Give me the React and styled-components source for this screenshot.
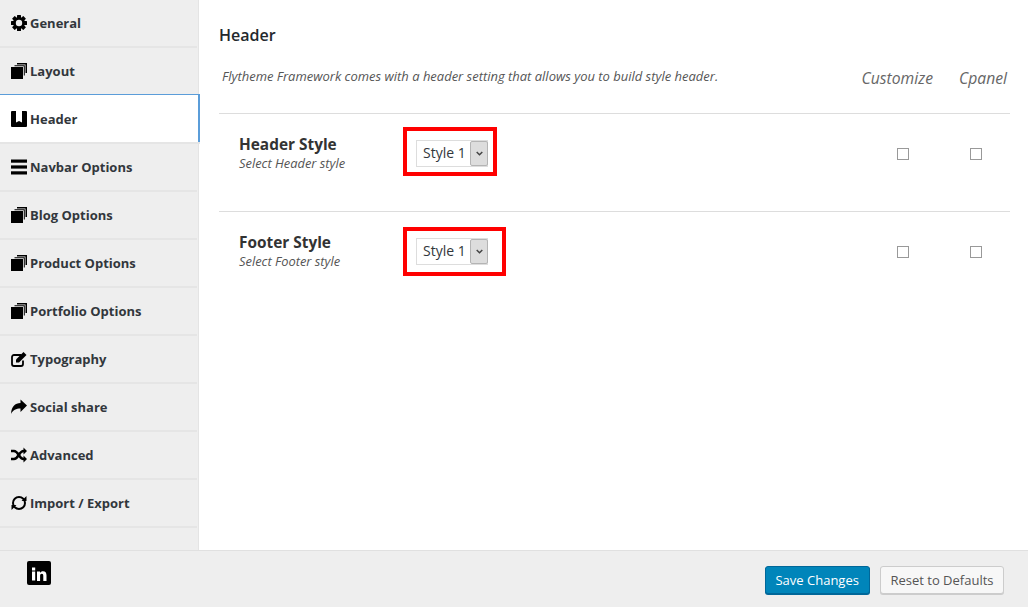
import React from 'react';
import styled, { createGlobalStyle } from 'styled-components';

const GlobalStyle = createGlobalStyle`
  html, body { margin: 0; padding: 0; background: #fff; }
  body { font-family: 'Open Sans', 'Noto Sans', sans-serif; color: #333; }
`;

const Page = styled.div`
  width: 1028px;
  height: 607px;
  display: flex;
  flex-direction: column;
  overflow: hidden;
`;
const Body = styled.div`
  height: 550px;
  display: flex;
`;
const Sidebar = styled.ul`
  width: 198px;
  flex: none;
  margin: 0;
  padding: 0;
  list-style: none;
  background: #eee;
  border-right: 1px solid #e4e4e4;
`;
const NavItem = styled.li`
  height: 48px;
  box-sizing: border-box;
  display: flex;
  align-items: center;
  gap: 3px;
  padding: 0 0 1px 11px;
  font-size: 13px;
  font-weight: 700;
  color: #32373c;
  border-bottom: 2px solid #e5e5e5;
  width: 197px;
  ${(p) => p.$active && `
    position: relative;
    z-index: 1;
    width: 200px;
    height: 50px;
    margin-top: -2px;
    padding-top: 2px;
    background: #fff;
    box-shadow: inset 0 1px 0 #5b9dd9, inset -2px 0 0 #5b9dd9;
  `}
`;
const IconBox = styled.span`
  width: 16px;
  height: 16px;
  display: flex;
  align-items: center;
  justify-content: center;
  flex: none;
`;
const Main = styled.main`
  flex: 1;
  padding: 0 18px 0 20px;
  min-width: 0;
`;
const Title = styled.h2`
  margin: 0;
  padding-top: 24px;
  height: 22px;
  font-size: 16px;
  line-height: 22px;
  font-weight: 600;
  color: #23282d;
`;
const IntroRow = styled.div`
  height: 68px;
  display: flex;
  align-items: center;
  box-sizing: border-box;
  padding: 0 3px 2px 3px;
  border-bottom: 1px solid #ddd;
`;
const Intro = styled.p`
  flex: 1;
  margin: 0;
  font-size: 12.97px;
  font-style: italic;
  color: #555;
  padding-bottom: 5px;
`;
const ColumnHead = styled.span`
  font-size: 15.7px;
  font-style: italic;
  color: #666;
  margin-left: 26px;
  padding-bottom: 1px;
`;
const Row = styled.div`
  height: 98px;
  box-sizing: border-box;
  display: flex;
  align-items: flex-start;
  padding-left: 20px;
  border-bottom: ${(p) => (p.$last ? 'none' : '1px solid #ddd')};
`;
const Label = styled.div`
  width: 164px;
  padding-top: 21px;
`;
const LabelTitle = styled.div`
  font-size: 15.4px;
  line-height: 20px;
  font-weight: 700;
  color: #333;
`;
const LabelHint = styled.div`
  font-size: 12.9px;
  line-height: 15px;
  margin-top: 1px;
  font-style: italic;
  color: #555;
`;
const Highlight = styled.div`
  width: ${(p) => p.$width}px;
  height: 49px;
  box-sizing: border-box;
  margin-top: ${(p) => p.$top}px;
  border: 4px solid #f00;
  padding: ${(p) => p.$inset}px 0 0 9px;
`;
const Select = styled.div`
  width: 72px;
  height: 27px;
  box-sizing: border-box;
  display: flex;
  justify-content: space-between;
  border: 1px solid #ddd;
  background: #fff;
`;
const SelectText = styled.span`
  font-size: 14px;
  line-height: 24px;
  padding-left: 6px;
  color: #32373c;
`;
const SelectArrow = styled.span`
  width: 16px;
  margin-right: -1px;
  display: flex;
  align-items: center;
  justify-content: center;
  background: #ddd;
  border: 1px solid #b4b4b4;
  border-radius: 2px;
`;
const Checks = styled.div`
  margin-left: auto;
  display: flex;
  gap: 61px;
  padding: 34px 28px 0 0;
`;
const Checkbox = styled.span`
  width: 12px;
  height: 12px;
  box-sizing: border-box;
  border: 1px solid #999;
  background: #fff;
  display: block;
`;
const Footer = styled.footer`
  height: 57px;
  box-sizing: border-box;
  display: flex;
  align-items: flex-start;
  justify-content: space-between;
  background: #eee;
  border-top: 1px solid #e0e0e0;
  padding: 9px 24px 0 27px;
`;
const Social = styled.span`
  display: block;
  height: 24px;
  margin-top: 1px;
`;
const Buttons = styled.div`
  display: flex;
  gap: 10px;
  padding-top: 6px;
`;
const Button = styled.button`
  height: 28px;
  box-sizing: border-box;
  padding: ${(p) => (p.$primary ? '0 10px 0 9px' : '0 9.5px')};
  font-family: inherit;
  font-size: 13px;
  border-radius: 3px;
  border: 1px solid ${(p) => (p.$primary ? '#006799' : '#ccc')};
  background: ${(p) => (p.$primary ? '#0085ba' : '#f7f7f7')};
  color: ${(p) => (p.$primary ? '#fff' : '#555')};
  box-shadow: 0 1px 0 ${(p) => (p.$primary ? '#006799' : '#ccc')};
`;

const Icon = ({ children }) => (
  <svg width="16" height="16" viewBox="0 0 16 16" fill="#000">{children}</svg>
);

const Gear = () => (
  <Icon>
    {[0, 45, 90, 135].map((a) => (
      <rect key={a} x="6" y="0" width="4" height="16" rx="0.5" transform={`rotate(${a} 8 8)`} />
    ))}
    <circle cx="8" cy="8" r="6" />
    <circle cx="8" cy="8" r="3.200" fill="#eee" />
  </Icon>
);
const Stack = () => (
  <Icon>
    <path d="M6 0h10v10h-1.500V1.500H6z" />
    <path d="M3.500 2.200H13.800V12.500h-1V3.200H3.500z" />
    <rect x="0" y="4" width="12" height="12" />
  </Icon>
);
const Bookmark = () => (
  <Icon>
    <path d="M1 0h4v11.500L8 10l3 1.500V0h4a1 1 0 0 1 1 1v14a1 1 0 0 1-1 1H1a1 1 0 0 1-1-1V1a1 1 0 0 1 1-1z" />
  </Icon>
);
const Bars = () => (
  <Icon>
    <rect x="0" y="0.500" width="16" height="3.200" />
    <rect x="0" y="6.400" width="16" height="3.200" />
    <rect x="0" y="12.300" width="16" height="3.200" />
  </Icon>
);
const Edit = () => (
  <Icon>
    <path d="M10.500 4H3a2 2 0 0 0-2 2v7a2 2 0 0 0 2 2h7a2 2 0 0 0 2-2V9.500" fill="none" stroke="#000" strokeWidth="1.800" />
    <path d="M5 8.500L12.500 1l3 3L8 11.500H5z" />
  </Icon>
);
const Share = () => (
  <Icon>
    <path d="M16 6.500L9.500 0.500V4C4 4 0.500 7.500 0 15c2-4 5-5.500 9.500-5.500V13z" />
  </Icon>
);
const Shuffle = () => (
  <Icon>
    <path d="M0 4h3c4.500 0 5 8 9.500 8h.5M0 12h3c4.500 0 5-8 9.500-8h.5" fill="none" stroke="#000" strokeWidth="2.400" />
    <path d="M12.500 0.500L16 4l-3.500 3.500zM12.500 8.500L16 12l-3.500 3.500z" />
  </Icon>
);
const Sync = () => (
  <Icon>
    <circle cx="8" cy="8" r="6" fill="none" stroke="#000" strokeWidth="2" />
    <path d="M15.500 1v5h-5zM0.500 15v-5h5z" />
  </Icon>
);
const Chevron = () => (
  <svg width="7" height="5" viewBox="0 0 7 5" fill="none" stroke="#444" strokeWidth="1.500">
    <path d="M.7 1l2.800 2.800L6.300 1" />
  </svg>
);
const Linkedin = () => (
  <svg width="24" height="24" viewBox="0 0 24 24">
    <rect width="24" height="24" rx="2" fill="#000" />
    <path fill="#fff" d="M5 6.500h3.200v3H5zM5 10.500h3.200V19.500H5zM10 10.500h3v1.400c.6-1 1.700-1.700 3-1.700 2.500 0 3.500 1.600 3.500 4.200v5.600h-3.200v-5c0-1.400-.4-2.200-1.500-2.200-1.200 0-1.700.9-1.700 2.200v5H10z" />
  </svg>
);

const navItems = [
  { label: 'General', icon: <Gear /> },
  { label: 'Layout', icon: <Stack /> },
  { label: 'Header', icon: <Bookmark />, active: true },
  { label: 'Navbar Options', icon: <Bars /> },
  { label: 'Blog Options', icon: <Stack /> },
  { label: 'Product Options', icon: <Stack /> },
  { label: 'Portfolio Options', icon: <Stack /> },
  { label: 'Typography', icon: <Edit /> },
  { label: 'Social share', icon: <Share /> },
  { label: 'Advanced', icon: <Shuffle /> },
  { label: 'Import / Export', icon: <Sync /> },
];

const settings = [
  { title: 'Header Style', hint: 'Select Header style', box: 94, top: 13, inset: 9 },
  { title: 'Footer Style', hint: 'Select Footer style', box: 103, top: 15, inset: 7 },
];

const App = () => (
  <Page>
    <GlobalStyle />
    <Body>
      <Sidebar>
        {navItems.map((item) => (
          <NavItem key={item.label} $active={item.active}>
            <IconBox>{item.icon}</IconBox>
            {item.label}
          </NavItem>
        ))}
      </Sidebar>
      <Main>
        <Title>Header</Title>
        <IntroRow>
          <Intro>Flytheme Framework comes with a header setting that allows you to build style header.</Intro>
          <ColumnHead>Customize</ColumnHead>
          <ColumnHead>Cpanel</ColumnHead>
        </IntroRow>
        {settings.map((s, i) => (
          <Row key={s.title} $last={i === settings.length - 1}>
            <Label>
              <LabelTitle>{s.title}</LabelTitle>
              <LabelHint>{s.hint}</LabelHint>
            </Label>
            <Highlight $width={s.box} $top={s.top} $inset={s.inset}>
              <Select>
                <SelectText>Style 1</SelectText>
                <SelectArrow><Chevron /></SelectArrow>
              </Select>
            </Highlight>
            <Checks>
              <Checkbox />
              <Checkbox />
            </Checks>
          </Row>
        ))}
      </Main>
    </Body>
    <Footer>
      <Social><Linkedin /></Social>
      <Buttons>
        <Button $primary>Save Changes</Button>
        <Button>Reset to Defaults</Button>
      </Buttons>
    </Footer>
  </Page>
);

export default App;
